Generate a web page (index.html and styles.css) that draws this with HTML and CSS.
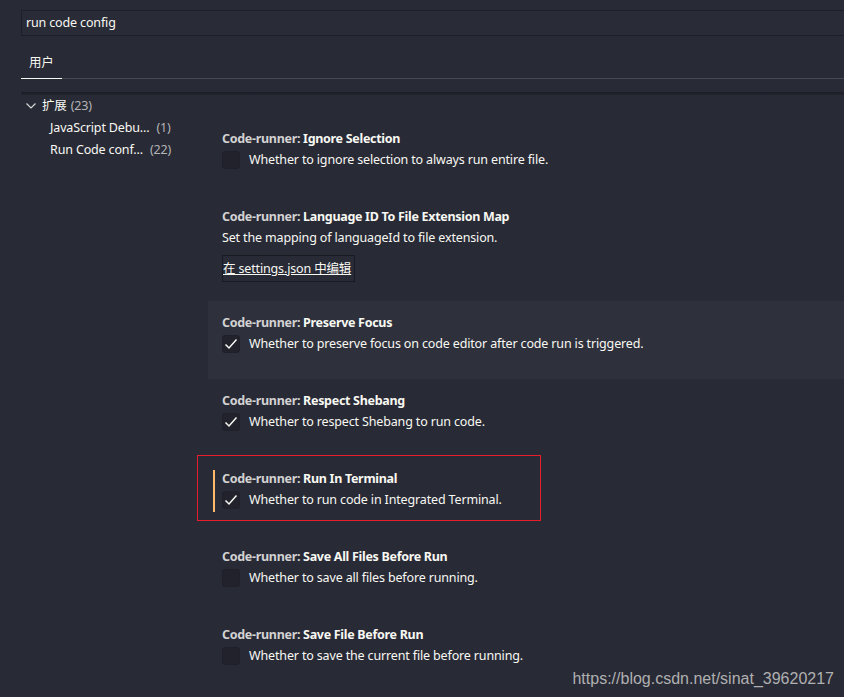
FILE: index.html
```html
<!DOCTYPE html>
<html lang="zh-CN">
<head>
  <meta charset="UTF-8">
  <title>Settings</title>
  <link rel="stylesheet" href="styles.css">
</head>
<body>
  <div class="search">run code config</div>

  <div class="tabs">
    <div class="tab active">用户</div>
  </div>

  <div class="scroll-shadow"></div>

  <div class="main">
    <div class="toc">
      <div class="toc-row group">
        <svg class="chevron" width="10" height="6" viewBox="0 0 10 6"><path d="M0.5 0.5 L5 5 L9.5 0.5" fill="none" stroke="#d8d8d8" stroke-width="1.2"/></svg>
        <span class="toc-name">扩展</span><span class="count">(23)</span>
      </div>
      <div class="toc-row child"><span class="toc-name">JavaScript Debu...</span><span class="count">(1)</span></div>
      <div class="toc-row child"><span class="toc-name">Run Code conf...</span><span class="count">(22)</span></div>
    </div>

    <div class="settings">
      <div class="item">
        <div class="title"><span class="cat">Code-runner: </span>Ignore Selection</div>
        <div class="row"><span class="checkbox"></span>Whether to ignore selection to always run entire file.</div>
      </div>

      <div class="item item-map">
        <div class="title"><span class="cat">Code-runner: </span>Language ID To File Extension Map</div>
        <div class="desc">Set the mapping of languageId to file extension.</div>
        <a class="edit-btn">在 settings.json 中编辑</a>
      </div>

      <div class="item hover">
        <div class="title"><span class="cat">Code-runner: </span>Preserve Focus</div>
        <div class="row"><span class="checkbox checked"><svg width="16" height="16" viewBox="0 0 16 16"><path d="M2.5 8.5 L6 12 L13.5 3.5" fill="none" stroke="#f8f8f2" stroke-width="1.5"/></svg></span>Whether to preserve focus on code editor after code run is triggered.</div>
      </div>

      <div class="item">
        <div class="title"><span class="cat">Code-runner: </span>Respect Shebang</div>
        <div class="row"><span class="checkbox checked"><svg width="16" height="16" viewBox="0 0 16 16"><path d="M2.5 8.5 L6 12 L13.5 3.5" fill="none" stroke="#f8f8f2" stroke-width="1.5"/></svg></span>Whether to respect Shebang to run code.</div>
      </div>

      <div class="item modified">
        <div class="title"><span class="cat">Code-runner: </span>Run In Terminal</div>
        <div class="row"><span class="checkbox checked"><svg width="16" height="16" viewBox="0 0 16 16"><path d="M2.5 8.5 L6 12 L13.5 3.5" fill="none" stroke="#f8f8f2" stroke-width="1.5"/></svg></span>Whether to run code in Integrated Terminal.</div>
        <div class="mark-box"></div>
      </div>

      <div class="item">
        <div class="title"><span class="cat">Code-runner: </span>Save All Files Before Run</div>
        <div class="row"><span class="checkbox"></span>Whether to save all files before running.</div>
      </div>

      <div class="item">
        <div class="title"><span class="cat">Code-runner: </span>Save File Before Run</div>
        <div class="row"><span class="checkbox"></span>Whether to save the current file before running.</div>
      </div>
    </div>
  </div>

  <div class="watermark">https://blog.csdn.net/sinat_39620217</div>
</body>
</html>
```

FILE: styles.css
```css
body {
  margin: 0;
  background-color: #282a36;
  color: #f8f8f2;
  font-family: "Noto Sans", "Noto Sans CJK SC", sans-serif;
  font-size: 12.5px;
  letter-spacing: -0.15px;
  height: 697px;
  overflow: hidden;
  position: relative;
}
.search {
  margin: 10px 0 0 21px;
  height: 26px;
  box-sizing: border-box;
  border: 1px solid #1d1e27;
  border-right: none;
  padding-left: 4px;
  line-height: 23px;
  background-color: #292b37;
}
.tabs {
  margin-left: 21px;
  display: flex;
  border-bottom: 1px solid #484a52;
}
.tab {
  padding: 18px 8px 6px;
  line-height: 18px;
  border-bottom: 1px solid #f8f8f2;
  margin-bottom: -1px;
}
.scroll-shadow {
  margin: 13px 0 0 21px;
  height: 3px;
  background: linear-gradient(#1c1d25, #23242e);
}
.main {
  display: flex;
}
.toc {
  width: 187px;
  margin-left: 21px;
  flex-shrink: 0;
}
.toc-row {
  height: 22px;
  line-height: 22px;
  display: flex;
  align-items: center;
  white-space: nowrap;
}
.toc-row.group {
  padding-left: 5px;
}
.chevron {
  margin-right: 6px;
}
.toc-row.child {
  padding-left: 29px;
}
.count {
  color: #b4b4b4;
  margin-left: 4px;
}
.child .count {
  margin-left: 7px;
}
.settings {
  flex: 1;
  padding-top: 22px;
}
.item {
  position: relative;
  padding: 13px 14px 25px;
  height: 40px;
}
.item.hover {
  background-color: #2e303c;
}
.item-map {
  height: 75px;
  padding-bottom: 18px;
}
.title {
  font-weight: bold;
  letter-spacing: -0.3px;
  line-height: 18px;
  white-space: nowrap;
}
.cat {
  color: #d2d2d2;
}
.row {
  display: flex;
  align-items: center;
  margin-top: 3px;
  line-height: 18px;
  white-space: nowrap;
}
.desc {
  margin-top: 3px;
  line-height: 18px;
}
.checkbox {
  width: 18px;
  height: 18px;
  box-sizing: border-box;
  border: 1px solid #1f2029;
  border-radius: 3px;
  background-color: #21222c;
  margin-right: 9px;
  display: flex;
  align-items: center;
  justify-content: center;
  flex-shrink: 0;
}
.edit-btn {
  display: inline-block;
  margin-top: 8px;
  height: 27px;
  line-height: 25px;
  box-sizing: border-box;
  border: 1px solid #191a21;
  padding: 0 3px 0 0;
  text-decoration: underline;
  color: #f8f8f2;
}
.modified::before {
  content: "";
  position: absolute;
  left: 5px;
  top: 13px;
  width: 2px;
  height: 42px;
  background-color: #ffb86c;
}
.mark-box {
  position: absolute;
  left: -11px;
  top: -2px;
  width: 342px;
  height: 64px;
  border: 1px solid #e81c2a;
}
.watermark {
  position: absolute;
  right: 10px;
  top: 670px;
  font-family: "Liberation Sans", Arial, sans-serif;
  font-size: 16px;
  letter-spacing: 0;
  color: #b0b0b0;
}
```
